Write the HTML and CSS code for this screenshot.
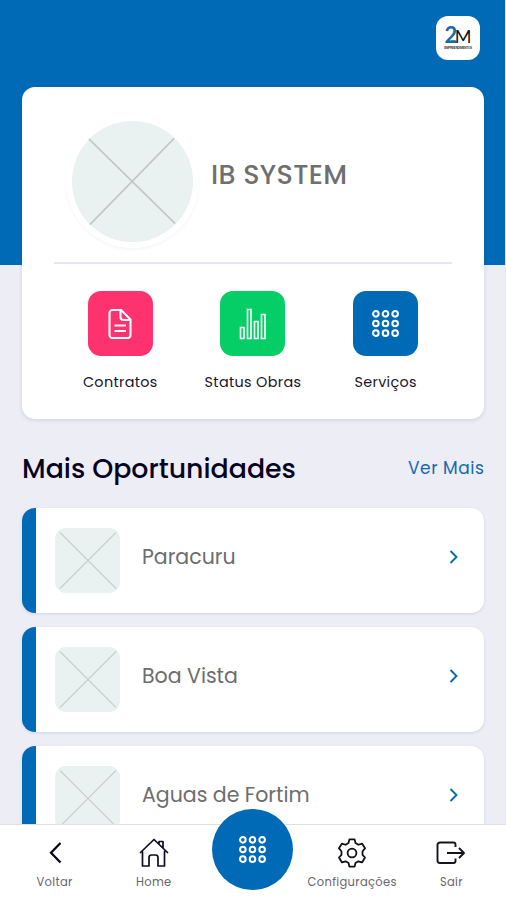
FILE: index.html
```html
<!DOCTYPE html>
<html lang="pt-BR">
<head>
<meta charset="utf-8">
<meta name="viewport" content="width=device-width, initial-scale=1">
<title>IB System</title>
<link rel="stylesheet" href="styles.css">
</head>
<body>
<svg class="defs" aria-hidden="true">
  <symbol id="grid" viewBox="0 0 28 28"><g fill="none" stroke="currentColor" stroke-width="2.1"><circle cx="4" cy="4" r="2.9"/><circle cx="14" cy="4" r="2.9"/><circle cx="24" cy="4" r="2.9"/><circle cx="4" cy="14" r="2.9"/><circle cx="14" cy="14" r="2.9"/><circle cx="24" cy="14" r="2.9"/><circle cx="4" cy="24" r="2.9"/><circle cx="14" cy="24" r="2.9"/><circle cx="24" cy="24" r="2.9"/></g></symbol>
  <symbol id="cross" viewBox="0 0 65 65"><path d="M5 4.5 61 60.5M61 4.5 5 60.5" stroke="#c9cecd" stroke-width="1.1"/></symbol>
  <symbol id="chevron" viewBox="0 0 10 14"><path d="m1.5 1 6 6-6 6" fill="none" stroke="#0a68b4" stroke-width="1.9"/></symbol>
</svg>
<div class="app">
  <main class="screen">
    <header class="top">
      <div class="logo">
        <div class="logo-mark"><span class="two">2</span><span class="em">M</span></div>
        <div class="logo-sub">EMPREENDIMENTOS</div>
      </div>
    </header>
    <section class="card">
      <div class="profile">
        <div class="avatar"><svg viewBox="0 0 122 122"><path d="M17 18 104 103.500M103 17.500 18 104.500" stroke="#c1c6c5" stroke-width="1.5"/></svg></div>
        <h1>IB SYSTEM</h1>
      </div>
      <div class="actions">
        <a class="action">
          <span class="tile pink"><svg width="26" height="32" viewBox="0 0 26 32"><g fill="none" stroke="#fff" stroke-width="2.1" stroke-linejoin="round"><path d="M5.500 2H14l9.500 9.500V27a3 3 0 0 1-3 3H5.500a3 3 0 0 1-3-3V5a3 3 0 0 1 3-3Z"/><path d="M13.500 2v7a3 3 0 0 0 3 3h7M7.500 17.500h11.500M7.500 23h11.500"/></g></svg></span>
          <span class="label">Contratos</span>
        </a>
        <a class="action">
          <span class="tile green"><svg width="28" height="32" viewBox="0 0 28 32"><g fill="none" stroke="#fff" stroke-width="1.600"><path d="M1.500 19.500h3.500v11H1.500zM8.500 1.500H12v29H8.500zM15.500 13.500H19v17h-3.500zM22.500 6.500H26v24h-3.500z"/></g></svg></span>
          <span class="label">Status Obras</span>
        </a>
        <a class="action">
          <span class="tile blue"><svg width="27" height="27"><use href="#grid"/></svg></span>
          <span class="label">Serviços</span>
        </a>
      </div>
    </section>
    <div class="heading"><h2>Mais Oportunidades</h2><a class="more">Ver Mais</a></div>
    <ul class="list">
      <li><svg class="thumb"><use href="#cross"/></svg><span class="place">Paracuru</span><svg class="chev"><use href="#chevron"/></svg></li>
      <li><svg class="thumb"><use href="#cross"/></svg><span class="place">Boa Vista</span><svg class="chev"><use href="#chevron"/></svg></li>
      <li><svg class="thumb"><use href="#cross"/></svg><span class="place">Aguas de Fortim</span><svg class="chev"><use href="#chevron"/></svg></li>
    </ul>
  </main>
  <nav class="nav">
    <a><svg width="30" height="30" viewBox="0 0 30 30"><path d="M20.500 5 11 14.800l9.500 9.700" fill="none" stroke="#080817" stroke-width="2.300"/></svg><span>Voltar</span></a>
    <a><svg width="32" height="30" viewBox="0 0 32 30"><path d="M4.500 13.500V28h6.500V19.500a2.500 2.500 0 0 1 2.500-2.500h4a2.500 2.500 0 0 1 2.500 2.500V28h6.500V13.500M2.500 14.500 16 1.500 29.500 14.500M21 6.200V3.500h4v6.500" fill="none" stroke="#100b20" stroke-width="1.700" stroke-linejoin="round" stroke-linecap="round"/></svg><span>Home</span></a>
    <a class="center"><span class="fab"><svg width="27" height="27"><use href="#grid"/></svg></span></a>
    <a><svg width="32" height="32" viewBox="0 0 32 32"><g fill="none" stroke="#100e18" stroke-width="1.900" stroke-linejoin="round"><path d="M13.200 1.500h5.600l.9 3.900 3.100 1.800 3.900-1.300 3.200 5.100-2.700 3.100v3.800l2.700 2.900-3.200 5.300-3.900-1.200-3.100 1.800-.9 3.800h-5.600l-.9-3.800-3.100-1.800-3.900 1.200-3.200-5.300 2.700-2.900v-3.800L2.100 11l3.200-5.100 3.900 1.300 3.100-1.800Z"/><circle cx="16" cy="16" r="4.700"/></g></svg><span>Configurações</span></a>
    <a><svg width="30" height="30" viewBox="0 0 30 30"><path d="M19.500 9V6.500a2 2 0 0 0-2-2H4A2.500 2.500 0 0 0 1.500 7v15.500A2.500 2.500 0 0 0 4 25h13.500a2 2 0 0 0 2-2v-2.500M11 15h17M23 10l5 5-5 5" fill="none" stroke="#15151d" stroke-width="1.900" stroke-linejoin="round"/></svg><span>Sair</span></a>
  </nav>
</div>
</body>
</html>
```
FILE: styles.css
```css
* { box-sizing: border-box; }
body { margin: 0; font-family: Poppins, Inter, "Liberation Sans", sans-serif; }
svg { display: block; flex: none; }
h1, h2 { margin: 0; white-space: nowrap; }
.defs { width: 0; height: 0; position: absolute; }
.app { height: 900px; display: flex; flex-direction: column; overflow: hidden; }
.screen { flex: 1; min-height: 0; overflow: hidden; padding: 0 21px 0 22px; border-right: 1px solid #dce9f5; background: linear-gradient(#006ab6 265px, #ededf6 265px); }
.top { height: 87px; padding-top: 16px; display: flex; justify-content: flex-end; }
.logo { width: 44px; height: 44px; margin-right: 4px; padding-top: 8px; border-radius: 12px; background: #fff; }
.logo-mark { display: flex; justify-content: center; align-items: flex-end; height: 22px; }
.two { font: 700 22px/22px Lato, sans-serif; color: #166ba9; letter-spacing: -2.5px; }
.em { font: 400 18px/20px Lato, sans-serif; color: #111; }
.logo-sub { margin-top: 1px; font: 700 3px/3px "Liberation Sans", sans-serif; color: #333; letter-spacing: -.2px; text-align: center; }
.card { width: 462px; height: 332px; padding: 0 32px; border-radius: 13px; background: #fff; box-shadow: 0 1px 4px rgba(40,40,70,.15); }
.profile { height: 177px; display: flex; padding: 34px 0 0 18px; border-bottom: 2px solid #e6e6f2; }
.avatar { width: 121px; height: 121px; border-radius: 50%; background: #e9f1f1; box-shadow: 0 0 0 6px #fff, 0 2px 3px 6px rgba(0,0,0,.035); }
h1 { margin-left: 18px; padding-top: 36px; font-size: 27px; line-height: 36px; letter-spacing: .35px; color: #6f6f6f; font-weight: 500; }
.actions { display: grid; grid-template-columns: repeat(3, 1fr); padding-top: 27px; }
.action { display: flex; flex-direction: column; align-items: center; }
.tile { width: 65px; height: 65px; border-radius: 13px; display: flex; align-items: center; justify-content: center; color: #fff; }
.pink { background: #ff3270; }
.green { background: #05ce66; }
.blue { background: #006ab6; }
.label { margin-top: 16px; font-size: 14.4px; line-height: 21px; letter-spacing: .33px; color: #17142d; white-space: nowrap; }
.heading { height: 89px; display: flex; justify-content: space-between; padding-top: 30px; white-space: nowrap; }
h2 { font-size: 26.8px; line-height: 40px; color: #09031f; font-weight: 500; }
.more { font-size: 17px; line-height: 38px; letter-spacing: .55px; margin-right: -.5px; color: #1668ae; }
.list { list-style: none; margin: 0; padding: 0; display: grid; gap: 14px; }
.list li { height: 105px; border-left: 14px solid #006ab6; border-radius: 13px; background: #fff; display: flex; align-items: flex-start; padding: 20px 25px 0 19px; box-shadow: 0 1px 3px rgba(40,40,70,.12); }
.thumb { width: 65px; height: 65px; border-radius: 11px; background: #e9f1f1; }
.place { margin-left: 22px; flex: 1; font-size: 20.5px; line-height: 58px; color: #6c6d6e; white-space: nowrap; }
.chev { width: 10px; height: 14px; margin-top: 22px; }
.nav { position: relative; height: 76px; flex: none; padding: 0 5px; display: grid; grid-template-columns: repeat(5, 1fr); background: #fff; border-top: 1px solid #dedee8; }
.nav a { display: flex; flex-direction: column; align-items: center; padding-top: 13px; font-size: 11.5px; line-height: 16px; letter-spacing: .33px; color: #68666c; white-space: nowrap; }
.nav a > svg { height: 30px; margin-bottom: 6px; }
.nav .center { padding: 0; }
.fab { width: 81px; height: 81px; margin-top: -16px; border-radius: 50%; background: #006ab6; color: #fff; display: flex; align-items: center; justify-content: center; }
```
